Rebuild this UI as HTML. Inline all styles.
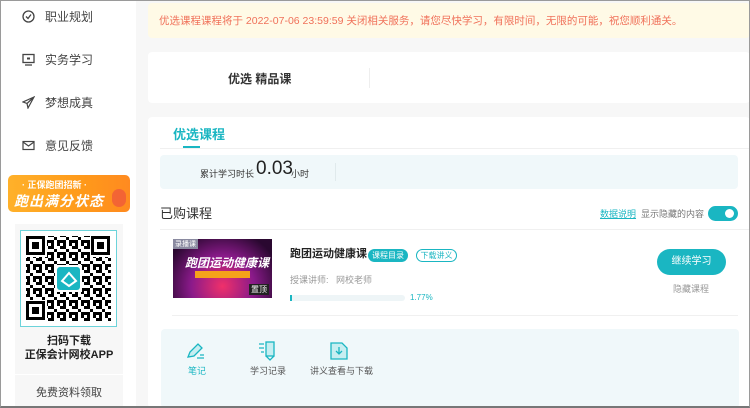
<!DOCTYPE html>
<html><head><meta charset="utf-8"><style>
*{margin:0;padding:0;box-sizing:border-box}
body{width:750px;height:408px;overflow:hidden;background:#f7f7f7;font-family:"Liberation Sans","Noto Sans CJK SC",sans-serif;position:relative;color:#333}
.frame{position:absolute;inset:0;border:1px solid #9a9a9a;border-bottom:2px solid #777;pointer-events:none;z-index:9}
.side{position:absolute;left:0;top:0;width:136px;height:408px;background:#fff}
.nav{position:absolute;left:22px;font-size:12px;color:#444;display:flex;align-items:center}
.nav svg{margin-right:10px}
.ab{position:absolute}
</style></head><body>
<div class="side">
 <div class="nav" style="top:8px"><svg width="13" height="13" viewBox="0 0 13 13"><circle cx="6.5" cy="6.5" r="5.5" fill="none" stroke="#444" stroke-width="1.3"/><path d="M4 6.5l2 2 3-4" fill="none" stroke="#444" stroke-width="1.3"/></svg>职业规划</div>
 <div class="nav" style="top:51px"><svg width="13" height="13" viewBox="0 0 13 13"><rect x="1" y="1.5" width="11" height="8" fill="none" stroke="#444" stroke-width="1.3"/><rect x="5" y="4.5" width="3" height="2" fill="#444"/><path d="M3 12h7" stroke="#444" stroke-width="1.3"/></svg>实务学习</div>
 <div class="nav" style="top:94px"><svg width="13" height="13" viewBox="0 0 13 13"><path d="M12 1L1 6l4 1.5L6 12z M5 7.5L12 1" fill="none" stroke="#444" stroke-width="1.2"/></svg>梦想成真</div>
 <div class="nav" style="top:137px"><svg width="13" height="13" viewBox="0 0 13 13"><rect x="1" y="2.5" width="11" height="8" fill="none" stroke="#444" stroke-width="1.2"/><path d="M1 3l5.5 4 5.5-4" fill="none" stroke="#444" stroke-width="1.2"/></svg>意见反馈</div>
 <div class="ab" style="left:8px;top:175px;width:122px;height:37px;border-radius:5px;background:linear-gradient(90deg,#ffb12a,#ff9a1a 60%,#ff8a20);overflow:hidden">
  <div class="ab" style="left:14px;top:3px;font-size:9px;color:#fff;font-weight:bold">· 正保跑团招新 ·</div>
  <div class="ab" style="left:6px;top:16px;font-size:14px;color:#fff;font-weight:bold;font-style:italic;letter-spacing:1px">跑出满分状态</div>
  <div class="ab" style="left:104px;top:14px;width:14px;height:18px;border-radius:7px;background:#f05a3a;opacity:.8"></div>
 </div>
 <div class="ab" style="left:15px;top:224px;width:108px;height:184px;background:#f7f7f7"></div>
 <div class="ab" style="left:20px;top:230px;width:97px;height:97px;border:1px solid #6cd3da;background:#fff">
  <svg width="95" height="95" viewBox="0 0 95 95" style="position:absolute;left:0;top:0">
   <defs><pattern id="q" width="12" height="12" patternUnits="userSpaceOnUse"><rect x="0" y="0" width="3" height="3"/><rect x="6" y="0" width="3" height="6"/><rect x="3" y="3" width="3" height="3"/><rect x="9" y="6" width="3" height="3"/><rect x="0" y="9" width="6" height="3"/><rect x="6" y="9" width="3" height="3"/></pattern></defs>
   <rect x="5" y="5" width="85" height="85" fill="url(#q)"/>
   <g fill="#fff"><rect x="4" y="4" width="22" height="22"/><rect x="69" y="4" width="22" height="22"/><rect x="4" y="69" width="22" height="22"/></g>
   <g fill="none" stroke="#000" stroke-width="3"><rect x="6.5" y="6.5" width="16" height="16"/><rect x="71.5" y="6.5" width="16" height="16"/><rect x="6.5" y="71.5" width="16" height="16"/></g>
   <g fill="#000"><rect x="11" y="11" width="7" height="7"/><rect x="76" y="11" width="7" height="7"/><rect x="11" y="76" width="7" height="7"/></g>
   <rect x="34" y="34" width="27" height="27" fill="#fff"/><rect x="36" y="36" width="23" height="23" rx="3" fill="#1ab6c2"/>
   <path d="M41 50l7-8 7 8-7 5z" fill="none" stroke="#fff" stroke-width="2"/>
  </svg>
 </div>
 <div class="ab" style="left:15px;top:334px;width:108px;text-align:center;font-size:11px;font-weight:bold;color:#222;line-height:14px">扫码下载<br>正保会计网校APP</div>
 <div class="ab" style="left:15px;top:374px;width:108px;height:1px;background:#fff"></div>
 <div class="ab" style="left:15px;top:384px;width:108px;text-align:center;font-size:11px;color:#444">免费资料领取</div>
</div>
<div class="ab" style="left:148px;top:3px;width:602px;height:35px;background:#fffae6;border-radius:4px;font-size:10.5px;color:#f0715a;padding:10px 0 0 11px">优选课程课程将于 2022-07-06 23:59:59 关闭相关服务，请您尽快学习，有限时间，无限的可能，祝您顺利通关。</div>
<div class="ab" style="left:148px;top:52px;width:602px;height:51px;background:#fff;border-radius:4px">
 <div class="ab" style="left:80px;top:18px;font-size:12px;font-weight:bold;color:#333">优选 精品课</div>
 <div class="ab" style="left:221px;top:16px;width:1px;height:20px;background:#eee"></div>
</div>
<div class="ab" style="left:148px;top:117px;width:602px;height:291px;background:#fff;border-radius:4px"></div>
<div class="ab" style="left:173px;top:124px;font-size:13px;font-weight:bold;color:#1ab6c2">优选课程</div>
<div class="ab" style="left:183px;top:146px;width:17px;height:2px;background:#1ab6c2"></div>
<div class="ab" style="left:160px;top:148px;width:590px;height:1px;background:#f0f0f0"></div>
<div class="ab" style="left:160px;top:155px;width:578px;height:34px;background:#f0f8fa;border-radius:4px">
 <div class="ab" style="left:40px;top:12px;font-size:9px;color:#333">累计学习时长</div>
 <div class="ab" style="left:96px;top:3px;font-size:19px;color:#222">0.03</div>
 <div class="ab" style="left:131px;top:12px;font-size:9px;color:#333">小时</div>
 <div class="ab" style="left:175px;top:8px;width:1px;height:18px;background:#e0eaec"></div>
</div>
<div class="ab" style="left:160px;top:203px;font-size:13px;color:#333">已购课程</div>
<div class="ab" style="left:600px;top:207px;font-size:9px;color:#1ab6c2;text-decoration:underline">数据说明</div>
<div class="ab" style="left:641px;top:207px;font-size:9px;color:#777">显示隐藏的内容</div>
<div class="ab" style="left:708px;top:206px;width:30px;height:15px;border-radius:8px;background:#1ab6c2"><div class="ab" style="left:17px;top:3px;width:9px;height:9px;border-radius:50%;background:#fff"></div></div>
<div class="ab" style="left:160px;top:229px;width:590px;height:1px;background:#f0f0f0"></div>
<div class="ab" style="left:173px;top:239px;width:99px;height:59px;background:radial-gradient(ellipse at 50% 80%,#f0306a,#8a1a8a 45%,#2a0830 85%);overflow:hidden">
 <div class="ab" style="left:0;top:0;font-size:7px;background:#8a8aa0;color:#fff;padding:0 2px">录播课</div>
 <div class="ab" style="left:12px;top:15px;font-size:12px;font-weight:bold;color:#fff;font-style:italic">跑团运动健康课</div>
 <div class="ab" style="left:22px;top:32px;width:55px;height:7px;background:#f5a21a"></div>
 <div class="ab" style="left:76px;top:45px;font-size:8px;color:#fff;background:#222;padding:0 2px">置顶</div>
</div>
<div class="ab" style="left:290px;top:245px;font-size:11px;font-weight:bold;color:#222">跑团运动健康课</div>
<div class="ab" style="left:368px;top:249px;width:40px;height:13px;border-radius:7px;background:#1ab6c2;color:#fff;font-size:8px;text-align:center;line-height:13px">课程目录</div>
<div class="ab" style="left:416px;top:249px;width:41px;height:13px;border-radius:7px;border:1px solid #1ab6c2;color:#1ab6c2;font-size:8px;text-align:center;line-height:11px">下载讲义</div>
<div class="ab" style="left:290px;top:273px;font-size:9px;color:#999">授课讲师:&nbsp;&nbsp;&nbsp;网校老师</div>
<div class="ab" style="left:290px;top:295px;width:115px;height:6px;border-radius:3px;background:#eef5f7"><div style="width:2px;height:6px;background:#1ab6c2"></div></div>
<div class="ab" style="left:410px;top:293px;font-size:8px;color:#1ab6c2">1.77%</div>
<div class="ab" style="left:657px;top:249px;width:69px;height:26px;border-radius:13px;background:#1ab6c2;color:#fff;font-size:10px;text-align:center;line-height:26px">继续学习</div>
<div class="ab" style="left:673px;top:282px;font-size:9px;color:#999">隐藏课程</div>
<div class="ab" style="left:172px;top:315px;width:566px;height:1px;background:#f0f0f0"></div>
<div class="ab" style="left:161px;top:329px;width:578px;height:79px;background:#f0f8fa;border-radius:4px"></div>
<svg class="ab" style="left:185px;top:341px" width="22" height="20" viewBox="0 0 22 20"><path d="M3 16l2-5 8-8 4 4-8 8z" fill="#c7eef1" stroke="#1ab6c2" stroke-width="1.3"/><path d="M12 17h7M15 14h4" stroke="#1ab6c2" stroke-width="1.3"/></svg>
<div class="ab" style="left:188px;top:364px;font-size:9px;color:#1ab6c2">笔记</div>
<svg class="ab" style="left:257px;top:340px" width="20" height="22" viewBox="0 0 20 22"><rect x="9" y="2" width="8" height="14" fill="#c7eef1" stroke="#1ab6c2" stroke-width="1.3"/><path d="M9 16l4 4 4-4M2 4h5M2 8h5M4 12h3" fill="none" stroke="#1ab6c2" stroke-width="1.3"/></svg>
<div class="ab" style="left:250px;top:364px;font-size:9px;color:#555">学习记录</div>
<svg class="ab" style="left:329px;top:341px" width="20" height="20" viewBox="0 0 20 20"><path d="M2 2h11l5 5v11H2z" fill="#c7eef1" stroke="#1ab6c2" stroke-width="1.3"/><path d="M10 6v7M7 10l3 3 3-3" fill="none" stroke="#1ab6c2" stroke-width="1.3"/></svg>
<div class="ab" style="left:310px;top:364px;font-size:9px;color:#555">讲义查看与下载</div>
<div class="frame"></div>
</body></html>
